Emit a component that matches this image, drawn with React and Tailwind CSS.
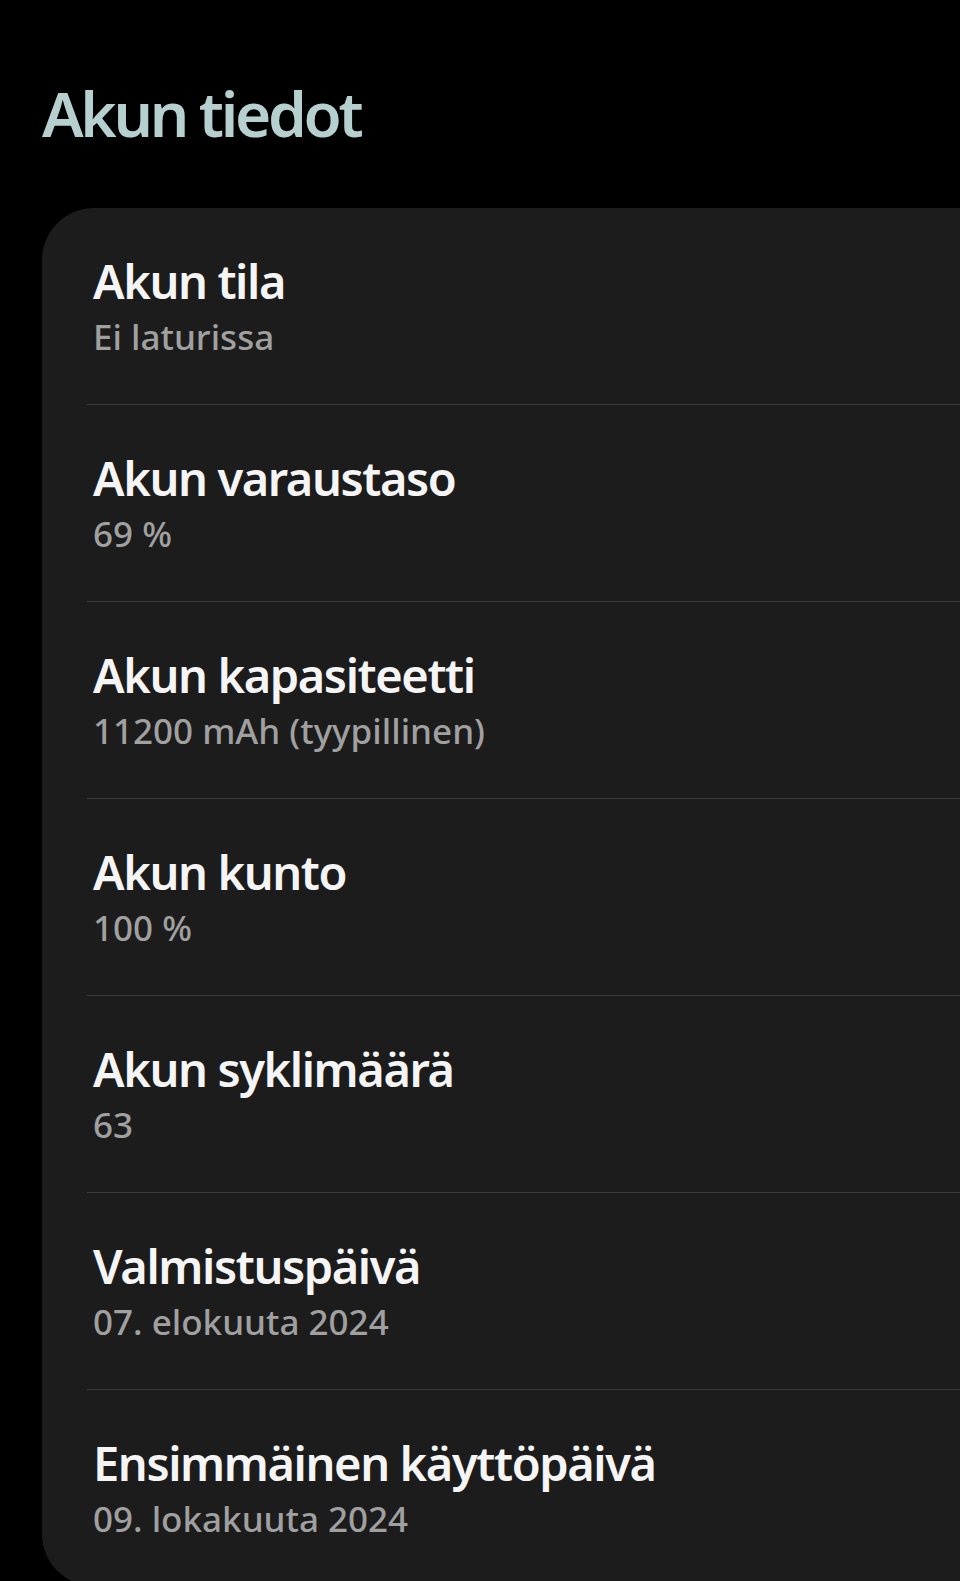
export default function App() {
  const rows = [
    ["Akun tila", "Ei laturissa"],
    ["Akun varaustaso", "69 %"],
    ["Akun kapasiteetti", "11200 mAh (tyypillinen)"],
    ["Akun kunto", "100 %"],
    ["Akun syklimäärä", "63"],
    ["Valmistuspäivä", "07. elokuuta 2024"],
    ["Ensimmäinen käyttöpäivä", "09. lokakuuta 2024"],
  ];
  return (
    <div
      className="h-[1581px] w-[960px] overflow-hidden bg-black"
      style={{ fontFamily: '"Noto Sans", "Open Sans", sans-serif' }}
    >
      <h1 className="pl-[42px] pt-[82px] text-[62px] font-semibold leading-none tracking-[-3.3px] text-[#b6cfcf]">
        Akun tiedot
      </h1>
      <div className="mt-[64px] ml-[42px] rounded-l-[52px] bg-[#1c1c1c]">
        <div className="ml-[45px]">
          {rows.map(([t, s], i) => (
            <div
              key={t}
              className={
                "flex h-[196px] flex-col justify-center pl-[6px] " +
                (i > 0 ? "box-content border-t border-[#3a3a3a]" : "")
              }
            >
              <div className="text-[47px] font-semibold leading-none tracking-[-1.4px] text-[#f5f5f5]">
                {t}
              </div>
              <div className="mt-[14px] text-[35px] font-medium leading-none text-[#a0a0a0]">
                {s}
              </div>
            </div>
          ))}
        </div>
      </div>
    </div>
  );
}
